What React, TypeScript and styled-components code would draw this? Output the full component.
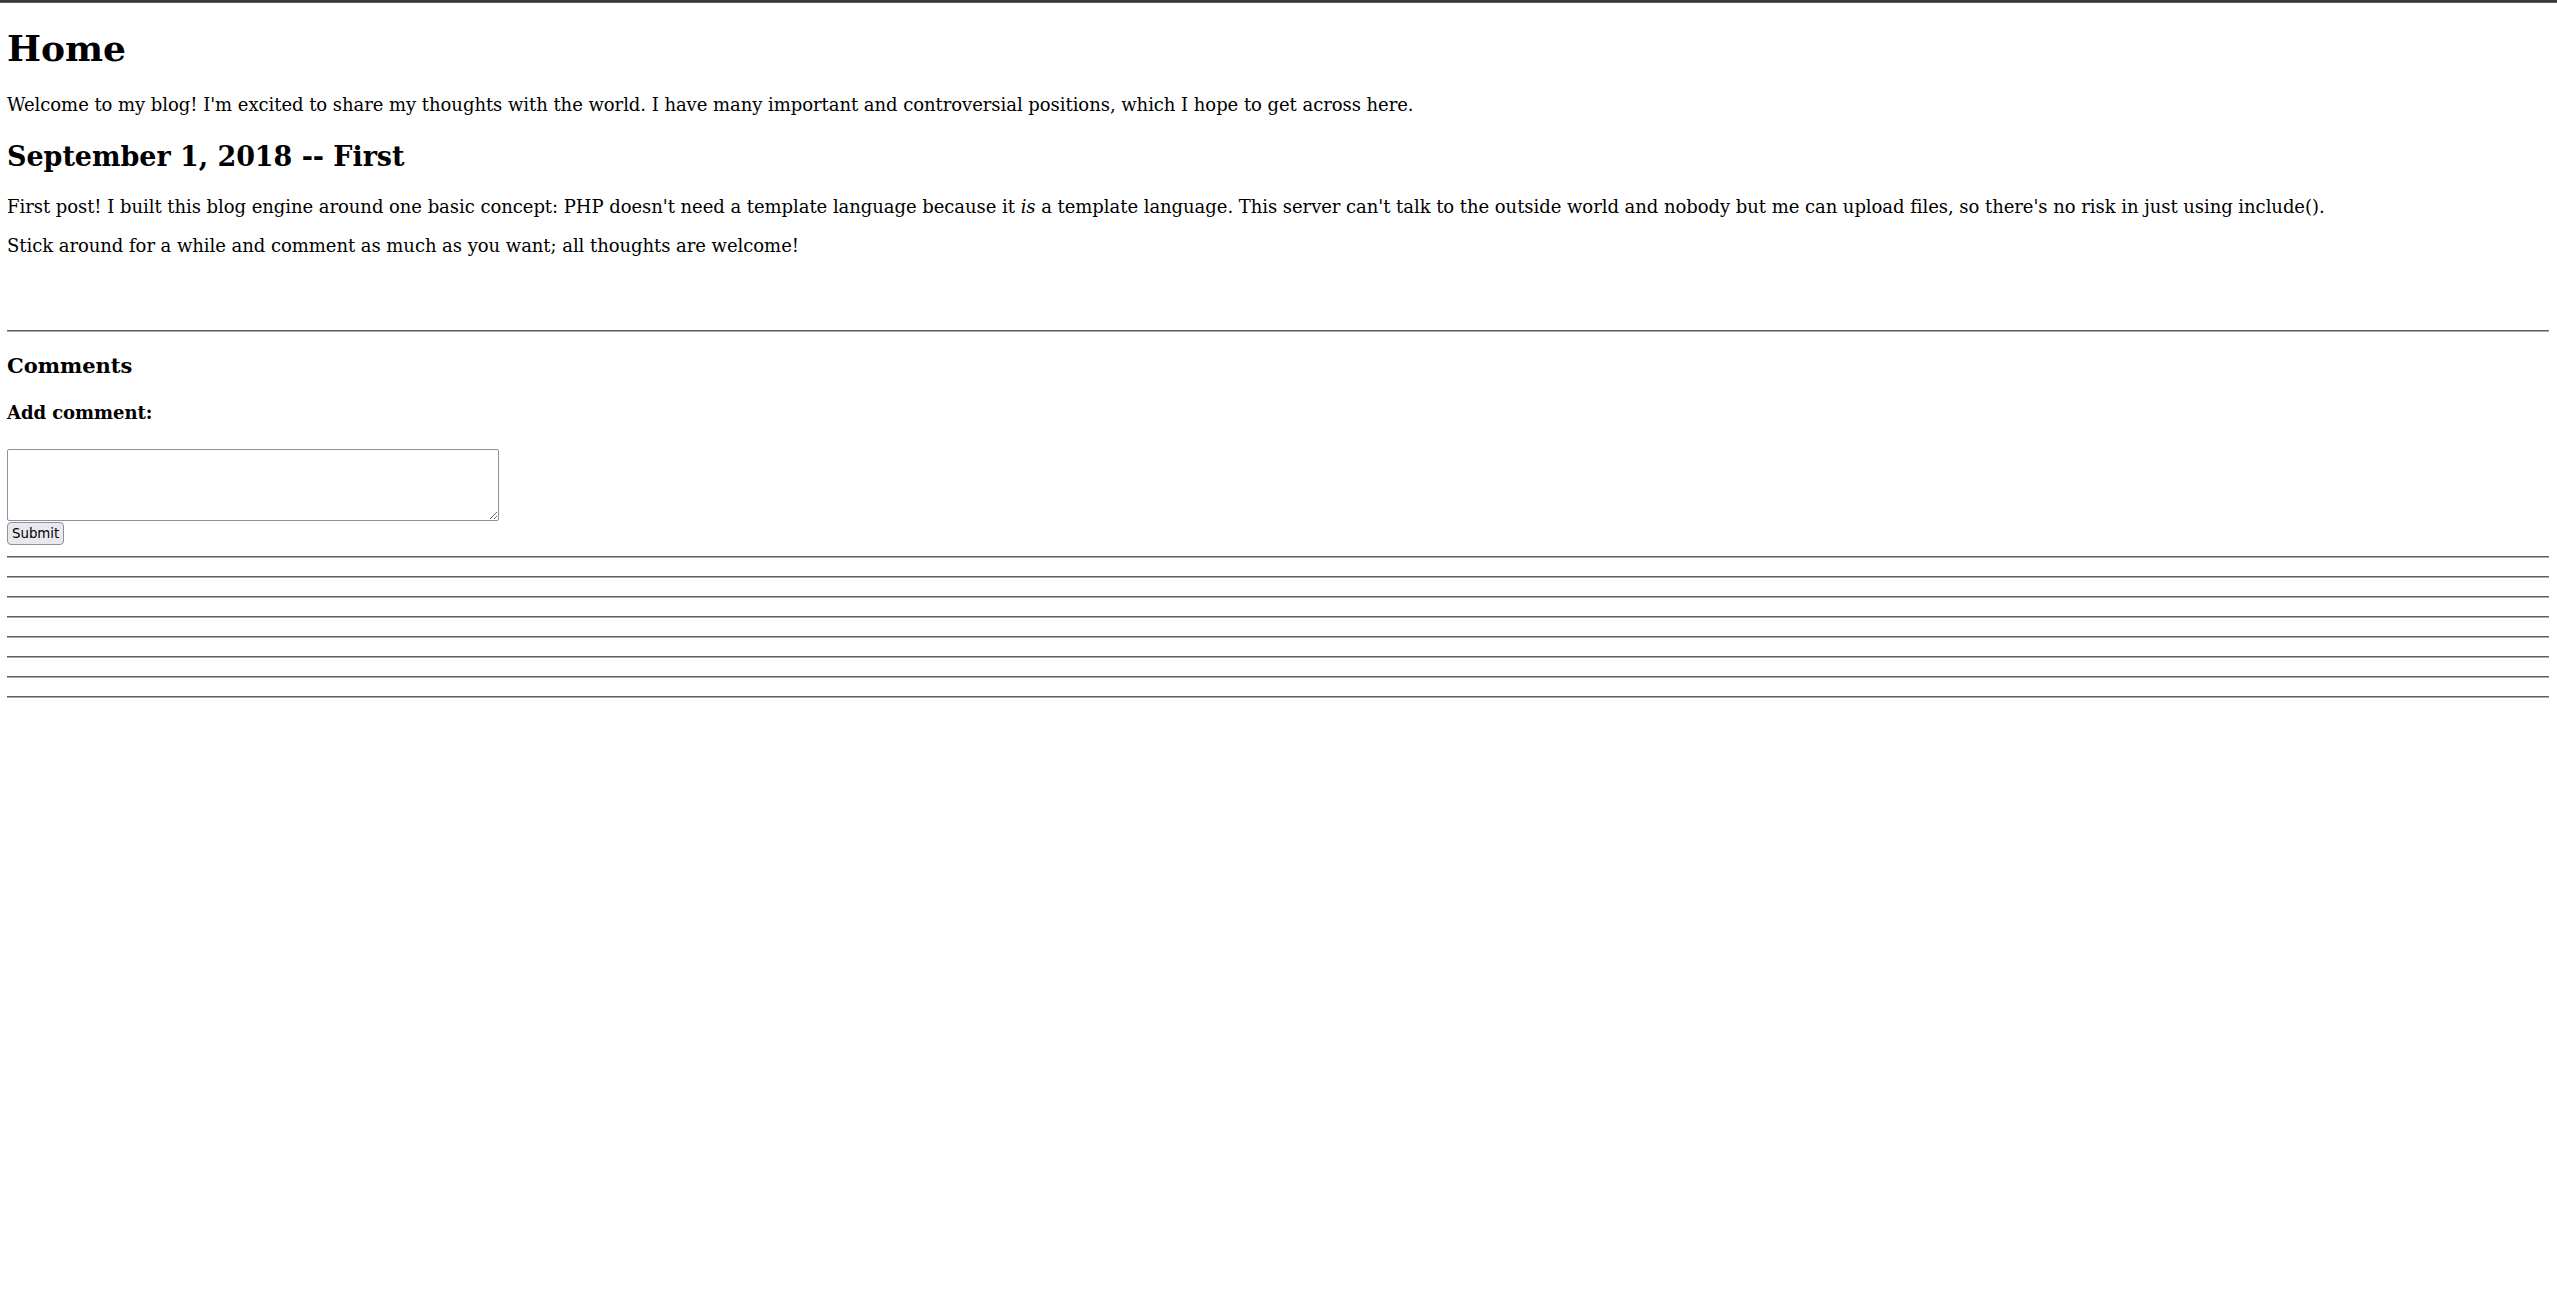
import React from "react";
import styled, { createGlobalStyle } from "styled-components";

const Global = createGlobalStyle`
  html, body {
    margin: 0;
    padding: 0;
    background: #ffffff;
  }
  body {
    font-family: "DejaVu Serif", serif;
    font-size: 18px;
    line-height: 1.2;
    letter-spacing: -0.05px;
    color: #000000;
  }
`;

const TopBar = styled.div`
  height: 2px;
  background: #36383e;
  border-bottom: 1px solid #5b5d63;
`;

const Page = styled.main`
  padding: 0 8px 8px 7px;
`;

const Title = styled.h1`
  font-size: 36px;
  font-weight: bold;
  line-height: 1.2;
  margin: 24.12px 0;
`;

const PostTitle = styled.h2`
  font-size: 27px;
  font-weight: bold;
  line-height: 1.2;
  margin: 25px 0 22.41px;
`;

const Para = styled.p`
  margin: 18px 0;
`;

const Rules = styled.div<{ $top?: number }>`
  display: flex;
  flex-direction: column;
  margin-top: ${(p) => p.$top ?? 0}px;
`;

const Rule = styled.hr`
  margin: 9px 0;
  height: 0;
  border: 0;
  border-top: 1px solid #606060;
  border-bottom: 1px solid #a8a8a8;
`;

const Comments = styled.section``;

const SectionTitle = styled.h3`
  font-size: 21.06px;
  font-weight: bold;
  line-height: 1.2;
  margin: 12px 0 21.06px;
`;

const SubTitle = styled.h4`
  font-size: 18px;
  font-weight: bold;
  line-height: 1.2;
  margin: 23.94px 0 25.5px;
`;

const Form = styled.form`
  display: flex;
  flex-direction: column;
  align-items: flex-start;
  gap: 1px;
  margin: 0;
`;

const TextBox = styled.textarea`
  box-sizing: border-box;
  width: 492px;
  height: 72px;
  border: 1px solid #8f8f9d;
  border-radius: 2px;
  padding: 2px;
  margin: 0;
  font-family: "DejaVu Sans Mono", monospace;
  font-size: 13.33px;
  background: #ffffff;
  resize: both;
`;

const SubmitButton = styled.button`
  box-sizing: border-box;
  height: 23px;
  padding: 0 4px;
  margin: 0;
  border: 1px solid #8f8f9d;
  border-radius: 4px;
  background: #e9e9ed;
  color: #000000;
  font-family: "DejaVu Sans", sans-serif;
  font-size: 13.33px;
  letter-spacing: 0;
  line-height: 1;
`;

export default function App() {
  return (
    <>
      <Global />
      <TopBar />
      <Page>
        <Title>Home</Title>
        <Para>
          Welcome to my blog! I'm excited to share my thoughts with the world. I have many
          important and controversial positions, which I hope to get across here.
        </Para>
        <PostTitle>September 1, 2018 -- First</PostTitle>
        <Para>
          First post! I built this blog engine around one basic concept: PHP doesn't need a
          template language because it <i>is</i> a template language. This server can't talk to
          the outside world and nobody but me can upload files, so there's no risk in just using
          include().
        </Para>
        <Para>Stick around for a while and comment as much as you want; all thoughts are welcome!</Para>
        <Rules $top={64}>
          <Rule />
        </Rules>
        <Comments>
          <SectionTitle>Comments</SectionTitle>
          <SubTitle>Add comment:</SubTitle>
          <Form onSubmit={(e) => e.preventDefault()}>
            <TextBox />
            <SubmitButton type="submit">Submit</SubmitButton>
          </Form>
        </Comments>
        <Rules $top={2}>
          {Array.from({ length: 8 }).map((_, i) => (
            <Rule key={i} />
          ))}
        </Rules>
      </Page>
    </>
  );
}
